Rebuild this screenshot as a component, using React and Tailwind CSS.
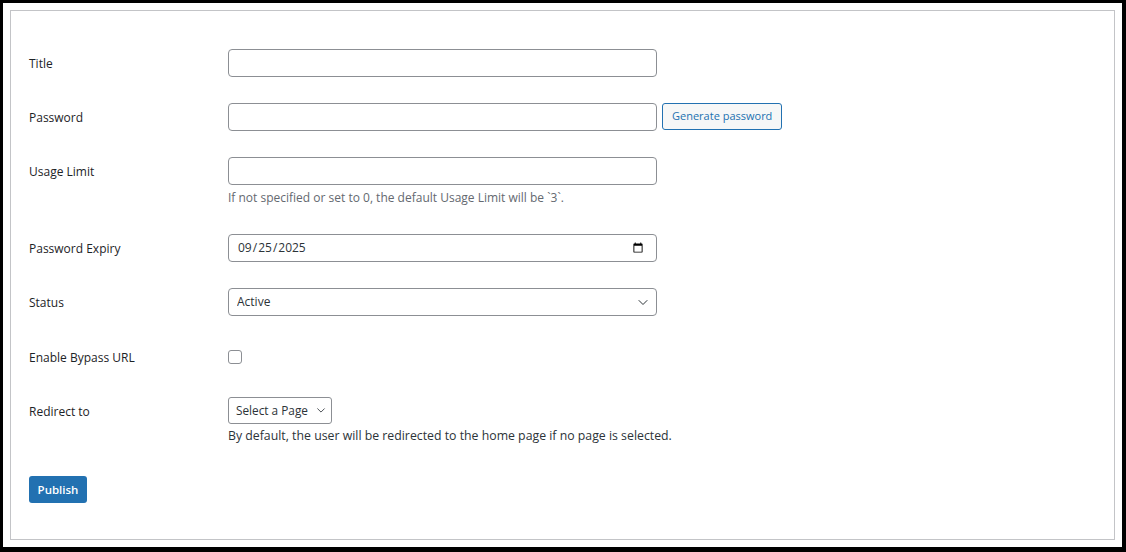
import React from 'react'

const font = { fontFamily: '"Open Sans", "Noto Sans", Arial, sans-serif' }

const Chevron = ({ className, size = 12 }) => (
    <svg className={className} width={size} height={size} viewBox="0 0 12 12" fill="none">
        <path d="M2 4.5l4 4 4-4" stroke="#2c3338" strokeWidth="1" strokeLinecap="round" strokeLinejoin="round" />
    </svg>
)

const Label = ({ children }) => (
    <div className="w-[199px] shrink-0 h-[28px] pt-[2px] flex items-center text-[12px] font-medium text-[#1d2327]">
        {children}
    </div>
)

const inputCls = "w-[429px] h-[28px] rounded-[4px] border border-[#8c8f94] bg-white px-2 text-[12px] text-[#2c3338] outline-none"

export default function App() {
    return (
        <div style={font} className="w-[1126px] h-[552px] bg-black pt-[3px] pl-[3px] pr-[4px] pb-[5px]">
            <div className="w-full h-full bg-white p-[7px]">
                <div className="w-full h-full border border-[#c3c4c7] pl-[18px] pt-[38px]">
                    {/* Title */}
                    <div className="flex">
                        <Label>Title</Label>
                        <input type="text" className={inputCls} />
                    </div>

                    {/* Password */}
                    <div className="flex mt-[26px]">
                        <Label>Password</Label>
                        <input type="text" className={inputCls} />
                        <button className="ml-[5px] h-[27px] px-[9px] rounded-[3px] border border-[#2271b1] bg-[#f6f7f7] text-[11px] text-[#2271b1]">
                            Generate password
                        </button>
                    </div>

                    {/* Usage limit */}
                    <div className="flex mt-[26px]">
                        <Label>Usage Limit</Label>
                        <div>
                            <input type="text" className={inputCls} />
                            <p className="mt-[4px] text-[12px] leading-[18px] text-[#646970]">
                                If not specified or set to 0, the default Usage Limit will be `3`.
                            </p>
                        </div>
                    </div>

                    {/* Expiry */}
                    <div className="flex mt-[27px]">
                        <Label>Password Expiry</Label>
                        <input type="date" defaultValue="2025-09-25" className={inputCls + " pr-[10px]"} />
                    </div>

                    {/* Status */}
                    <div className="flex mt-[26px]">
                        <Label>Status</Label>
                        <div className="relative">
                            <select defaultValue="active" className={inputCls + " appearance-none"}>
                                <option value="active">Active</option>
                                <option value="inactive">Inactive</option>
                            </select>
                            <Chevron className="absolute right-[8px] top-[8px] pointer-events-none" />
                        </div>
                    </div>

                    {/* Bypass */}
                    <div className="flex mt-[27px]">
                        <Label>Enable Bypass URL</Label>
                        <div className="h-[28px] flex items-center">
                            <input type="checkbox" className="appearance-none w-[14px] h-[14px] rounded-[3px] border border-[#8c8f94] bg-white" />
                        </div>
                    </div>

                    {/* Redirect */}
                    <div className="flex mt-[26px]">
                        <Label>Redirect to</Label>
                        <div>
                            <div className="relative w-fit">
                                <select className="h-[27px] w-[104px] appearance-none rounded-[3px] border border-[#8c8f94] bg-white pl-[7px] text-[11.8px] text-[#2c3338] outline-none">
                                    <option>Select a Page</option>
                                </select>
                                <Chevron size={10} className="absolute right-[6px] top-[8px] pointer-events-none" />
                            </div>
                            <p className="mt-[3px] text-[12.3px] leading-[18px] text-[#2c3338]">
                                By default, the user will be redirected to the home page if no page is selected.
                            </p>
                        </div>
                    </div>

                    <button className="mt-[31px] h-[27px] w-[58px] rounded-[3px] bg-[#2271b1] text-[11.5px] font-semibold text-white">
                        Publish
                    </button>
                </div>
            </div>
        </div>
    )
}
